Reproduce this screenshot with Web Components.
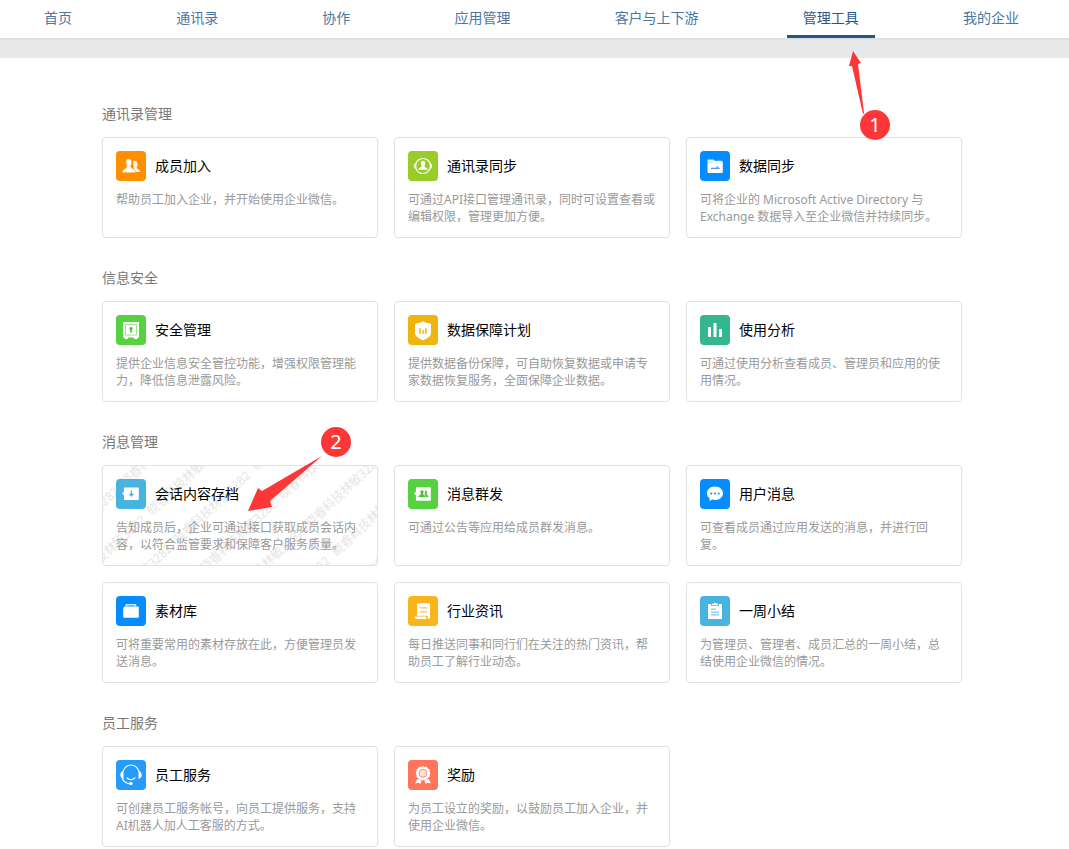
<!DOCTYPE html>
<html lang="zh-CN">
<head>
<meta charset="utf-8">
<meta name="viewport" content="width=device-width, initial-scale=1">
<title>管理工具</title>
<style>
  body {
    margin: 0;
    background: #fff;
    font-family: "Noto Sans", "Noto Sans CJK SC", sans-serif;
    font-size: 14px;
    line-height: 20px;
    color: #000;
  }
</style>
</head>
<body>
<admin-page>
  <top-nav slot="nav">
    <nav-item>首页</nav-item>
    <nav-item>通讯录</nav-item>
    <nav-item>协作</nav-item>
    <nav-item>应用管理</nav-item>
    <nav-item>客户与上下游</nav-item>
    <nav-item active>管理工具<step-marker slot="marker" step="1"></step-marker></nav-item>
    <nav-item>我的企业</nav-item>
  </top-nav>

  <tool-section heading="通讯录管理">
    <tool-card icon="members" heading="成员加入">帮助员工加入企业，并开始使用企业微信。</tool-card>
    <tool-card icon="sync" heading="通讯录同步">可通过API接口管理通讯录，同时可设置查看或编辑权限，管理更加方便。</tool-card>
    <tool-card icon="folder" heading="数据同步">可将企业的 Microsoft Active Directory 与 Exchange 数据导入至企业微信并持续同步。</tool-card>
  </tool-section>

  <tool-section heading="信息安全">
    <tool-card icon="safe" heading="安全管理">提供企业信息安全管控功能，增强权限管理能力，降低信息泄露风险。</tool-card>
    <tool-card icon="shield" heading="数据保障计划">提供数据备份保障，可自助恢复数据或申请专家数据恢复服务，全面保障企业数据。</tool-card>
    <tool-card icon="chart" heading="使用分析">可通过使用分析查看成员、管理员和应用的使用情况。</tool-card>
  </tool-section>

  <tool-section heading="消息管理">
    <tool-card icon="archive" heading="会话内容存档" watermark="晓睿科技林敏3282">告知成员后，企业可通过接口获取成员会话内容，以符合监管要求和保障客户服务质量。<step-marker slot="marker" step="2"></step-marker></tool-card>
    <tool-card icon="broadcast" heading="消息群发">可通过公告等应用给成员群发消息。</tool-card>
    <tool-card icon="chat" heading="用户消息">可查看成员通过应用发送的消息，并进行回复。</tool-card>
    <tool-card icon="library" heading="素材库">可将重要常用的素材存放在此，方便管理员发送消息。</tool-card>
    <tool-card icon="news" heading="行业资讯">每日推送同事和同行们在关注的热门资讯，帮助员工了解行业动态。</tool-card>
    <tool-card icon="summary" heading="一周小结">为管理员、管理者、成员汇总的一周小结，总结使用企业微信的情况。</tool-card>
  </tool-section>

  <tool-section heading="员工服务">
    <tool-card icon="service" heading="员工服务">可创建员工服务帐号，向员工提供服务，支持AI机器人加人工客服的方式。</tool-card>
    <tool-card icon="award" heading="奖励">为员工设立的奖励，以鼓励员工加入企业，并使用企业微信。</tool-card>
  </tool-section>
</admin-page>

<script>
const ICONS = {
  members: ['#ff8f00', `
    <path opacity=".85" d="M17 10c3-1 5 1 4.600 4-.2 1.400-.6 2-.8 2.800 0 1.500 3.700 2 3.700 4.200H18z"/>
    <path stroke="#ff8f00" stroke-width=".6" d="M12.800 7.800c2.100 0 3.100 1.600 2.900 3.800-.1 1.800-.7 2.700-1 3.600 0 2.500 5 2.300 5 6.600H5.900c0-4 5-4 5-6.600-.4-.9-1-1.800-1.100-3.600-.1-2.200.9-3.800 3-3.800z"/>`],
  sync: ['#99cc28', `
    <circle cx="15" cy="15" r="7.500" fill="none" stroke="#fff" stroke-width="1.200" stroke-dasharray="21 2.560" stroke-dashoffset="-1"/>
    <path d="M15 9.700c1.500 0 2.300 1 2.200 2.600-.1 1.400-.6 2-.8 2.600 0 1.700 3.400 1.500 3.400 3.900h-9.600c0-2.400 3.400-2.200 3.400-3.900-.3-.6-.8-1.200-.9-2.600 0-1.600.8-2.600 2.300-2.600zM5.700 15l1-2.600 1.600.2v4.800l-1.500.1zM24.300 15l-1-2.600-1.600.2v4.800l1.500.1z"/>`],
  folder: ['#058cff', `
    <path opacity=".85" d="M7.500 8.500h6l1.300 1.200h7V11H7.500z"/>
    <path d="M7.500 11.300h5l1.200-1H22c.5 0 .8.300.8.800v10c0 .5-.3.800-.8.800H8.300c-.5 0-.8-.3-.8-.8z"/>
    <path fill="#459ff5" d="M11 16.800h5.600v-2l3.200 2.600v.7H11z"/>`],
  safe: ['#56d140', `
    <path d="M7 7h16v15.500h-1.500v1.600H18v-1.600h-6v1.600H8.500v-1.600H7z"/>
    <path fill="none" stroke="#9be48f" stroke-width="1" d="M9.500 9.500h11v10.500h-11z"/>
    <path fill="#48bf38" d="M15 12a1.700 1.700 0 0 1 .7 3.200v2.600h-1.400v-2.600a1.700 1.700 0 0 1 .7-3.200z"/>`],
  shield: ['#f0b40f', `
    <path d="M15 6.200c2 1.300 4.700 2.100 7 2.400.8.100 1 .6 1 1.300v8.300c0 3-4.300 5.600-8 7.300-3.700-1.700-8-4.300-8-7.300V9.900c0-.7.200-1.200 1-1.300 2.300-.3 5-1.100 7-2.400z"/>
    <path fill="#f0b40f" d="M11.300 13.300h1.500v5.400h-1.500zM14.300 15h1.500v3.700h-1.500zM17.200 13.300h1.500v5.400h-1.500z"/>`],
  chart: ['#34b78f', `
    <rect x="8" y="12" width="3" height="10" rx=".5"/><rect x="13.500" y="8" width="3" height="14" rx=".5"/><rect x="19" y="14" width="3" height="8" rx=".5"/>`],
  archive: ['#48b3e0', `
    <path d="M8.700 8.500H22c.6 0 .8.300.8.800v10.900c0 .6-.3.800-.8.800H8.700c-.5 0-.8-.3-.8-.8v-4.100L6.400 15v-1l1.500-1.100V9.300c0-.5.300-.8.800-.8z"/>
    <path fill="#48b3e0" d="M14.700 11.500h1.300v3.300h2L15.400 18l-2.700-3.200h2z"/>`],
  broadcast: ['#56d140', `
    <path d="M8.700 8.300H22c.6 0 .8.300.8.800v11.800c0 .6-.3.800-.8.800H8.700c-.5 0-.8-.3-.8-.8v-4.800L6.400 15v-1l1.500-1.100V9.100c0-.5.300-.8.800-.8z"/>
    <path fill="#48bf38" d="M14 11.300c1.200 0 1.700.8 1.600 1.800 0 .8-.4 1.300-.6 1.700 0 1.300 2.600 1.300 2.600 3.300h-7.200c0-2 2.600-2 2.600-3.300-.2-.4-.6-.9-.6-1.700-.1-1 .4-1.800 1.600-1.800zM17.400 11.500c1.300 0 1.700.9 1.600 1.800 0 .8-.4 1.100-.6 1.500 0 1.100 2 1.300 2 3.100h-2.200c-.2-1.300-1.600-1.800-1.600-2.700.6-1 1-2.300.1-3.500z"/>`],
  chat: ['#058cff', `
    <path d="M15 7.500c4.600 0 8 2.900 8 6.700s-3.400 6.800-8 6.800c-1 0-2-.2-2.900-.4l-2.500 1.700.1-2.800C8 18.300 7 16.400 7 14.200c0-3.800 3.400-6.700 8-6.700z"/>
    <g fill="#058cff"><circle cx="11.300" cy="14.500" r="1"/><circle cx="15" cy="14.500" r="1"/><circle cx="18.700" cy="14.500" r="1"/></g>`],
  library: ['#058cff', `
    <path opacity=".8" d="M9.500 10.500V9c0-.6.300-.9.900-.9h9c.6 0 .9.300.9.900v1.500h-1.500v-1h-7.700v1z"/>
    <path d="M8.500 10.500H22c.5 0 .8.300.8.800v9.700c0 .5-.3.800-.8.800H8c-.5 0-.8-.3-.8-.8v-9z"/>`],
  news: ['#f9b61c', `
    <path d="M9 8c0-.5.300-.8.800-.8h11.400c.5 0 .8.300.8.800v13.700c0 .8-.6 1.200-1.200 1.200-.7 0-1.300-.5-1.300-1.300v-1.900H9zM6.600 20.500h11.300c0 1.100.2 1.900.9 2.500H9c-1.500 0-2.400-1-2.400-2.500z"/>
    <path fill="#fbc54e" d="M11.700 11.300h7.500v1.200h-7.500zM11.700 15.300h7.500v1.200h-7.500z"/>`],
  summary: ['#48b3e0', `
    <path d="M8.700 8H11v2h8V8h2.300c.5 0 .7.300.7.700v13.600c0 .5-.2.700-.7.700H8.700c-.5 0-.7-.2-.7-.7V8.700c0-.4.200-.7.700-.7zM11.800 7.700h1.700a1.600 1.600 0 0 1 3 0h1.700v1.500h-6.400z"/>
    <path fill="#7cc8e9" d="M11 12.600h5v1.200h-5zM11 15.500h8v1.200h-8zM11 18.300h8v1.200h-8z"/>`],
  service: ['#269bfc', `
    <g fill="none" stroke="#fff" stroke-linecap="round"><path stroke-width="1.200" d="M7 11.500C8.500 7.200 11.300 5 15 5s6.500 2.200 8 6.500M6.500 19c1.500 2.700 3.500 4.200 7 4.700"/><path stroke-width="1.300" d="M11.200 18c2.200 2 5.400 2 7.600 0"/></g>
    <path d="M7.500 11.300v7.400c-2 0-3.200-1.700-3.200-3.700s1.200-3.700 3.200-3.700zM22.500 11.300v7.400c2 0 3.200-1.700 3.200-3.700s-1.200-3.700-3.200-3.700z"/><ellipse cx="14.800" cy="23.600" rx="2" ry="1.500"/>`],
  award: ['#ff755c', `
    <path d="M15 6l1.800.9 2-.1 1.100 1.700 1.700 1-.1 2 .9 1.800-.9 1.800.1 2-1.700 1-1.100 1.700-2-.1-1.800.9-1.800-.9-2 .1-1.100-1.700-1.700-1 .1-2-.9-1.800.9-1.800-.1-2 1.700-1 1.100-1.700 2 .1z"/>
    <circle cx="15" cy="13.300" r="4" fill="#ffe3dd" stroke="#ff8f7a"/>
    <path d="M9.300 18.900l1.400.9 3 .8-1.400 3.500-1.700-1.400-3.500.8zM20.700 18.900l-1.400.9-3 .8 1.400 3.500 1.700-1.400 3.500.8z"/>`]
};

const MARKERS = {
  1: { width: 48, height: 92, cx: 29, cy: 77, path: 'M7 3L15 15 12 16 18 65 17 66 6 18 3 18Z' },
  2: { width: 108, height: 90, cx: 91, cy: 18, path: 'M3 87L13 64 17 67 77 32 25 77 27 83Z' }
};

function define(name, render) {
  customElements.define(name, class extends HTMLElement {
    constructor() {
      super();
      this.attachShadow({ mode: 'open' });
    }
    connectedCallback() {
      this.shadowRoot.innerHTML = render(this);
    }
  });
}

define('admin-page', () => `
  <style>
    :host { display: block; }
    .band { height: 20px; background: linear-gradient(#d8dadc, #e7e8ea 3px); }
    main { display: flex; flex-direction: column; gap: 30px; padding: 46px 107px 2px 102px; }
  </style>
  <slot name="nav"></slot>
  <div class="band"></div>
  <main><slot></slot></main>`);

define('top-nav', () => `
  <style>
    :host { display: block; }
    nav { display: flex; justify-content: space-between; padding: 0 34px 0 28px; background: #fff; }
  </style>
  <nav><slot></slot></nav>`);

define('nav-item', el => `
  <style>
    :host { display: block; position: relative; flex: none; }
    a { display: block; padding: 8px 16px 7px; border-bottom: 3px solid transparent; color: #4d75a3; text-decoration: none; }
    a[aria-current] { color: #2b5688; border-color: #2d5385; }
    ::slotted(step-marker) { position: absolute; left: 59px; top: 48px; z-index: 2; }
  </style>
  <a href="#"${el.hasAttribute('active') ? ' aria-current="page"' : ''}><slot></slot></a>
  <slot name="marker"></slot>`);

define('tool-section', el => `
  <style>
    :host { display: block; }
    h2 { margin: 0 0 13px; font-size: 14px; font-weight: 400; line-height: 20px; color: #787878; }
    .grid { display: grid; grid-template-columns: repeat(3, minmax(0, 1fr)); gap: 16px; }
  </style>
  <section>
    <h2>${el.getAttribute('heading')}</h2>
    <div class="grid"><slot></slot></div>
  </section>`);

define('tool-icon', el => {
  const [color, shape] = ICONS[el.getAttribute('name')];
  return `
  <style>
    :host { display: block; width: 30px; height: 30px; border-radius: 4px; background: ${color}; }
    svg { display: block; }
  </style>
  <svg width="30" height="30" viewBox="0 0 30 30" fill="#fff" aria-hidden="true">${shape}</svg>`;
});

define('tool-card', el => {
  const mark = el.getAttribute('watermark');
  return `
  <style>
    :host { display: block; position: relative; }
    a { display: block; position: relative; box-sizing: border-box; height: 100%; padding: 13px 13px 12px; border: 1px solid #dde1e5; border-radius: 4px; color: #000; text-decoration: none; overflow: hidden; }
    header { display: flex; align-items: center; gap: 9px; position: relative; }
    h3 { margin: 0; font-size: 14px; font-weight: 400; line-height: 20px; }
    p { position: relative; margin: 10px 0 0; min-height: 34px; font-size: 12px; line-height: 17px; color: #999; }
    .watermark { position: absolute; inset: 0; width: 100%; height: 100%; }
    ::slotted(step-marker) { position: absolute; left: 143px; top: -41px; z-index: 2; }
  </style>
  <a href="#">
    ${mark ? `<svg class="watermark" aria-hidden="true">
      <defs><pattern id="mark" width="107" height="39" patternUnits="userSpaceOnUse" patternTransform="rotate(-43)">
        <text x="2" y="31" font-size="12" fill="#e2e2e2">${mark}</text>
      </pattern></defs>
      <rect width="100%" height="100%" fill="url(#mark)"/>
    </svg>` : ''}
    <header><tool-icon name="${el.getAttribute('icon')}"></tool-icon><h3>${el.getAttribute('heading')}</h3></header>
    <p><slot></slot></p>
  </a>
  <slot name="marker"></slot>`;
});

define('step-marker', el => {
  const step = el.getAttribute('step');
  const m = MARKERS[step];
  return `
  <style>
    :host { display: block; pointer-events: none; }
    svg { display: block; }
  </style>
  <svg width="${m.width}" height="${m.height}" fill="#fd3738">
    <path d="${m.path}"/>
    <circle cx="${m.cx}" cy="${m.cy}" r="15"/>
    <text x="${m.cx}" y="${m.cy + 7}" fill="#fff" font-size="20" text-anchor="middle">${step}</text>
  </svg>`;
});
</script>
</body>
</html>
